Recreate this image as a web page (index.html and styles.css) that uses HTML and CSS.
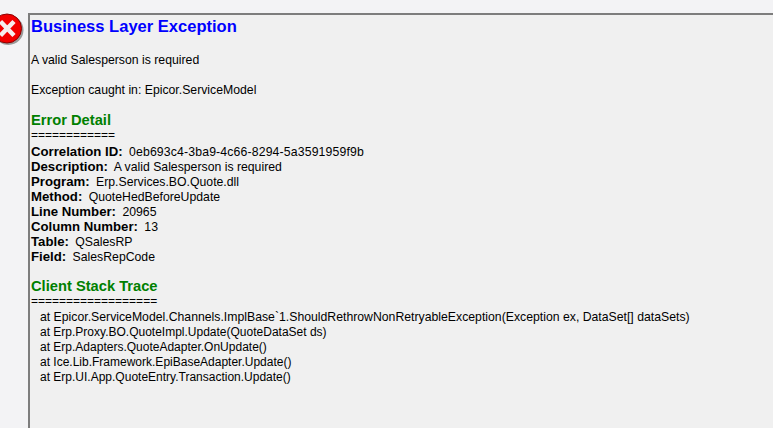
FILE: index.html
```html
<!DOCTYPE html>
<html lang="en">
<head>
    <meta charset="UTF-8">
    <meta name="viewport" content="width=device-width, initial-scale=1.0">
    <title>Business Layer Exception</title>
    <link rel="stylesheet" href="styles.css">
</head>
<body>

    <div class="dialog">
        <div class="icon-col">
            <svg class="error-icon" width="26" height="33" viewBox="0 0 26 33">
                <circle cx="8.5" cy="17" r="15" fill="#9a9a9a"/>
                <circle cx="7" cy="15.5" r="14.5" fill="#f20000" stroke="#8c0000" stroke-width="1"/>
                <path d="M0.5 8.5 L14 22.5 M14 8.5 L0.5 22.5" stroke="#f6eeee" stroke-width="4.5"/>
            </svg>
        </div>

        <div class="panel">
            <h1 class="title">Business Layer Exception</h1>
            <p class="line">A valid Salesperson is required</p>
            <p class="line">Exception caught in: Epicor.ServiceModel</p>

            <h2 class="section">Error Detail</h2>
            <div class="rule">============</div>
            <div class="details">
                <div class="row"><b>Correlation ID:</b> <span class="guid">0eb693c4-3ba9-4c66-8294-5a3591959f9b</span></div>
                <div class="row"><b>Description:</b> A valid Salesperson is required</div>
                <div class="row"><b>Program:</b> Erp.Services.BO.Quote.dll</div>
                <div class="row"><b>Method:</b> QuoteHedBeforeUpdate</div>
                <div class="row"><b>Line Number:</b> 20965</div>
                <div class="row"><b>Column Number:</b> 13</div>
                <div class="row"><b>Table:</b> QSalesRP</div>
                <div class="row"><b>Field:</b> SalesRepCode</div>
            </div>

            <h2 class="section">Client Stack Trace</h2>
            <div class="rule">==================</div>
            <div class="trace">
                <div class="row long">at Epicor.ServiceModel.Channels.ImplBase`1.ShouldRethrowNonRetryableException(Exception ex, DataSet[] dataSets)</div>
                <div class="row">at Erp.Proxy.BO.QuoteImpl.Update(QuoteDataSet ds)</div>
                <div class="row">at Erp.Adapters.QuoteAdapter.OnUpdate()</div>
                <div class="row">at Ice.Lib.Framework.EpiBaseAdapter.Update()</div>
                <div class="row">at Erp.UI.App.QuoteEntry.Transaction.Update()</div>
            </div>
        </div>
    </div>

</body>
</html>
```

FILE: styles.css
```css
html, body {
    height: 100%;
}

body {
    font-family: "Liberation Sans", Arial, sans-serif;
    font-size: 12.25px;
    line-height: 15px;
    color: #000;
    background-color: #fff;
    margin: 0;
    overflow: hidden;
}

.dialog {
    display: flex;
    height: 428px;
    background-color: #f3f3f5;
    padding-top: 13px;
    box-sizing: border-box;
}

.icon-col {
    width: 28px;
    flex-shrink: 0;
}

.error-icon {
    display: block;
}

.panel {
    flex: 1;
    background-color: #f0f0f0;
    border-top: 2px solid #7d7d7d;
    border-left: 2px solid #7d7d7d;
    padding: 2px 0 0 1px;
}

.title {
    margin: 0;
    font-size: 16.55px;
    line-height: 20px;
    font-weight: bold;
    color: #0000ff;
}

.line {
    margin: 0;
    padding-top: 16px;
}

.line + .line {
    padding-top: 15px;
}

.section {
    margin: 14px 0 0;
    font-size: 14.7px;
    line-height: 16px;
    font-weight: bold;
    color: #008000;
}

.rule {
    font-size: 12px;
    line-height: 15px;
}

.details {
    padding-top: 2px;
}

.row b {
    font-size: 13.2px;
    line-height: 0;
    margin-right: 3px;
}

.guid {
    letter-spacing: 0.15px;
}

.trace {
    font-size: 12px;
    padding: 1px 0 0 9px;
}

.trace .long {
    font-size: 12.25px;
}

.details + .section {
    margin-top: 13px;
}
```
